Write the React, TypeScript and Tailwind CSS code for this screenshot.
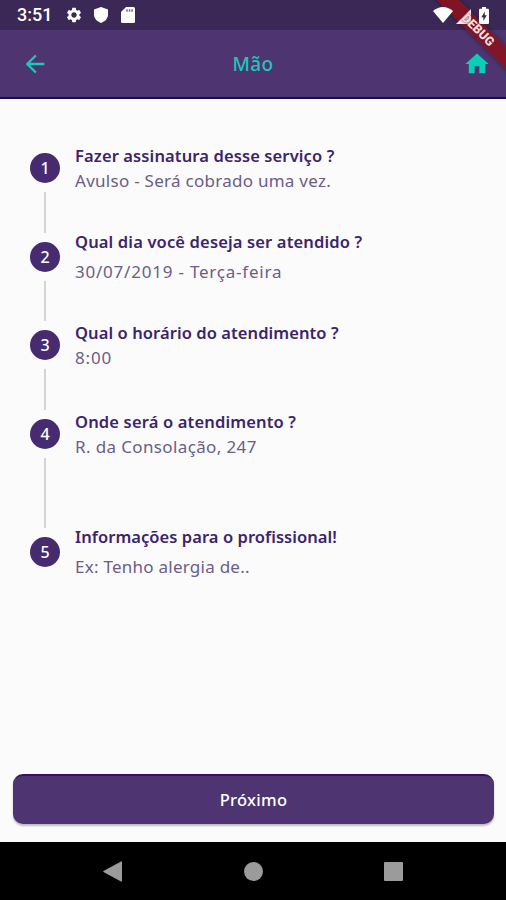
import { MdArrowBack, MdHome, MdSettings } from 'react-icons/md'

interface Step {
  title: string
  detail: string
  rowClass: string
  titleClass: string
  detailClass: string
}

const STEPS: Step[] = [
  {
    title: 'Fazer assinatura desse serviço ?',
    detail: 'Avulso - Será cobrado uma vez.',
    rowClass: 'h-[89px]',
    titleClass: '-mt-[9px] tracking-[0.12px]',
    detailClass: 'mt-[1px] tracking-[0.27px]',
  },
  {
    title: 'Qual dia você deseja ser atendido ?',
    detail: '30/07/2019 - Terça-feira',
    rowClass: 'h-[88px]',
    titleClass: '-mt-[12px] tracking-[0.15px]',
    detailClass: 'mt-[6px] tracking-[0.78px]',
  },
  {
    title: 'Qual o horário do atendimento ?',
    detail: '8:00',
    rowClass: 'h-[89px]',
    titleClass: '-mt-[9px] tracking-[0.08px]',
    detailClass: 'mt-[1px] tracking-[0.8px]',
  },
  {
    title: 'Onde será o atendimento ?',
    detail: 'R. da Consolação, 247',
    rowClass: 'h-[118px]',
    titleClass: '-mt-[9px] tracking-[0.16px]',
    detailClass: 'mt-[1px] tracking-[0.37px]',
  },
  {
    title: 'Informações para o profissional!',
    detail: 'Ex: Tenho alergia de..',
    rowClass: 'h-[60px]',
    titleClass: '-mt-[12px] tracking-[0.06px]',
    detailClass: 'mt-[6px] tracking-[0.25px]',
  },
]

function StatusBar() {
  return (
    <div className="flex h-[30px] items-center bg-[#3c2856] pl-[17px] pr-[17px] text-white">
      <span className="w-[35px] font-['Roboto',sans-serif] text-[18px] font-medium leading-[30px]">
        3:51
      </span>
      <MdSettings className="ml-[13px] size-[18px]" />
      <svg viewBox="0 0 14 16" className="ml-[11px] h-4 w-[14px]" fill="currentColor">
        <path d="M7 0 14 2.6V7.6C14 11.4 11 14.8 7 16 3 14.8 0 11.4 0 7.6V2.6Z" />
      </svg>
      <svg viewBox="0 0 14 16" className="ml-[13px] h-4 w-[14px]" fill="currentColor">
        <path d="M5 0H12.5Q14 0 14 1.5V14.5Q14 16 12.5 16H1.5Q0 16 0 14.5V5Z" />
        <path d="M5.3 2.2h1.5v2.6H5.3ZM7.8 2.2h1.5v2.6H7.8ZM10.3 2.2h1.5v2.6h-1.5Z" fill="#77698a" />
      </svg>
      <div className="relative z-10 ml-auto flex items-center">
        <svg viewBox="0 0 20 16" className="h-4 w-5" fill="currentColor">
          <path d="M0 4Q10-4 20 4L10 16Z" />
        </svg>
        <svg viewBox="0 0 15 15" className="ml-[3px] mt-[2px] h-[15px] w-[15px]" fill="currentColor">
          <path d="M15 0V15H0Z" fillOpacity="0.9" />
        </svg>
        <svg viewBox="0 0 10 17" className="ml-[8px] h-[17px] w-[10px]" fill="currentColor">
          <path d="M3 0H7V1.7H9Q10 1.7 10 2.7V16Q10 17 9 17H1Q0 17 0 16V2.7Q0 1.7 1 1.7H3Z" />
          <path d="M5.8 4.5V8.2H7.8L4.4 14V10.2H2.3Z" fill="#3c2856" />
        </svg>
      </div>
    </div>
  )
}

function AppBar() {
  return (
    <header className="grid h-[69px] grid-cols-3 items-center border-b-2 border-[#160b55] bg-[#4e3572] px-[21px] text-[#1cc8b8]">
      <MdArrowBack className="mt-px size-[28px]" />
      <h1 className="text-center text-[19px] font-medium leading-6 tracking-[0.4px]">Mão</h1>
      <MdHome className="-mr-[6px] mt-px size-[28px] justify-self-end text-[#08cfb8]" />
    </header>
  )
}

function StepRow({ step, index }: { step: Step; index: number }) {
  const isLast = index === STEPS.length - 1
  return (
    <li className={`flex ${step.rowClass}`}>
      <div className="flex w-[30px] flex-col items-center">
        <span className="flex size-[30px] shrink-0 items-center justify-center rounded-full bg-[#472b70] text-[16px] font-medium text-white">
          {index + 1}
        </span>
        {!isLast && <span className="my-[9px] w-[1.5px] flex-1 bg-[#d4d4d8]" />}
      </div>
      <div className="ml-[15px] whitespace-nowrap">
        <p className={`text-[16.5px] font-semibold leading-6 text-[#3b246b] ${step.titleClass}`}>
          {step.title}
        </p>
        <p className={`text-[17px] leading-6 text-[#6b5d88] ${step.detailClass}`}>{step.detail}</p>
      </div>
    </li>
  )
}

function NavigationBar() {
  return (
    <nav className="flex h-[58px] items-center justify-between bg-black px-[103px] text-[#9b9b9b]">
      <svg viewBox="0 0 19 21" className="h-[21px] w-[19px]" fill="currentColor">
        <path d="M18 .5Q19 0 19 1V20Q19 21 18 20.5L.5 11Q0 10.5 .5 10Z" />
      </svg>
      <span className="size-[19px] rounded-full bg-[#9b9b9b]" />
      <span className="size-[19px] rounded-[1px] bg-[#9b9b9b]" />
    </nav>
  )
}

/** Corner ribbon: the band runs under the status icons, its label over them. */
function DebugRibbon() {
  return (
    <>
      <div className="absolute left-[418px] top-[22px] h-4 w-[120px] rotate-45 bg-[#8c101c]/85 shadow-[0_0_5px_rgba(0,0,0,0.4)]" />
      <div className="absolute left-[418px] top-[22px] z-20 flex h-4 w-[120px] rotate-45 items-center justify-center font-['Roboto',sans-serif] text-[12.5px] font-black text-[#f3dcdf] [text-shadow:0_0_2px_#6b1420]">
        DEBUG
      </div>
    </>
  )
}

export default function App() {
  return (
    <div className="relative flex h-[900px] w-[506px] flex-col overflow-hidden bg-[#fbfbfb] font-['Noto_Sans',sans-serif]">
      <StatusBar />
      <AppBar />
      <main className="flex flex-1 flex-col">
        <ol className="ml-[30px] mt-[54px]">
          {STEPS.map((step, index) => (
            <StepRow key={step.title} step={step} index={index} />
          ))}
        </ol>
        <button
          type="button"
          className="mb-[18px] ml-[13px] mr-[12px] mt-auto h-[50px] rounded-[10px] border-t-2 border-[#3a1065] bg-[#4e3572] text-[16.5px] font-medium tracking-[0.3px] text-white shadow-[0_2px_2px_rgba(0,0,0,0.25)]"
        >
          Próximo
        </button>
      </main>
      <NavigationBar />
      <DebugRibbon />
    </div>
  )
}
